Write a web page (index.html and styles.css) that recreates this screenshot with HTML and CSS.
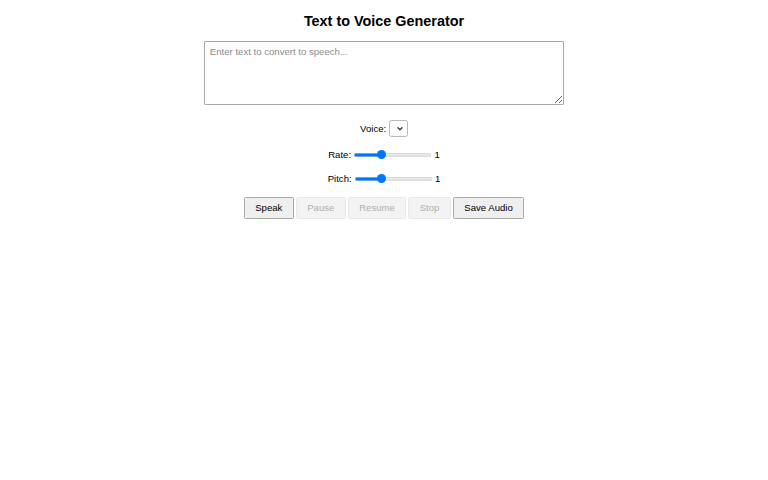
FILE: index.html
```html
<!DOCTYPE html>
<html lang="en">
<head>
<meta charset="utf-8">
<title>Text to Voice Generator</title>
<link rel="stylesheet" href="styles.css">
</head>
<body>
<main class="app">
  <h2 class="title">Text to Voice Generator</h2>
  <textarea class="text-input" placeholder="Enter text to convert to speech..."></textarea>
  <div class="controls">
    <div class="control">
      <label class="control-label" for="voice">Voice:</label>
      <span class="select-wrap">
        <select id="voice" class="voice-select"></select>
        <svg class="select-arrow" viewBox="0 0 6 4" width="6" height="4" aria-hidden="true"><path d="M1 0.8 L3 2.8 L5 0.8" fill="none" stroke="#333" stroke-width="1.3" stroke-linecap="round" stroke-linejoin="round"/></svg>
      </span>
    </div>
    <div class="control">
      <label class="control-label" for="rate">Rate:</label>
      <input id="rate" class="slider" type="range" min="0.5" max="2" step="0.1" value="1" style="--fill: 35%">
      <span class="control-value">1</span>
    </div>
    <div class="control">
      <label class="control-label" for="pitch">Pitch:</label>
      <input id="pitch" class="slider" type="range" min="0.5" max="2" step="0.1" value="1" style="--fill: 35%">
      <span class="control-value">1</span>
    </div>
  </div>
  <div class="buttons">
    <button class="btn">Speak</button>
    <button class="btn" disabled>Pause</button>
    <button class="btn" disabled>Resume</button>
    <button class="btn" disabled>Stop</button>
    <button class="btn">Save Audio</button>
  </div>
</main>
</body>
</html>
```

FILE: styles.css
```css
body {
  margin: 0;
  font-family: "Liberation Sans", Arial, sans-serif;
  font-size: 9.6px;
  color: #000;
  background: #fff;
}

.app {
  display: flex;
  flex-direction: column;
  align-items: center;
}

.title {
  font-size: 14.4px;
  font-weight: bold;
  margin: 12.6px 0 12.4px;
}

.text-input {
  box-sizing: border-box;
  width: 360px;
  height: 64.5px;
  padding: 3.6px 4.8px;
  margin: 0 0 14.4px;
  font-family: inherit;
  font-size: 9.6px;
  border: 1px solid #a9a9a9;
  border-radius: 1px;
}

.text-input::placeholder {
  color: #8c8c8c;
}

.controls {
  display: flex;
  flex-direction: column;
  align-items: center;
  gap: 12px;
}

.control {
  display: flex;
  align-items: center;
  justify-content: center;
  column-gap: 2.7px;
}

.select-wrap {
  position: relative;
  display: flex;
}

.voice-select {
  appearance: none;
  -webkit-appearance: none;
  box-sizing: border-box;
  width: 19px;
  height: 17px;
  margin: 0;
  border: 1px solid #b9b9b9;
  border-radius: 2.5px;
  background: #fff;
}

.select-arrow {
  position: absolute;
  left: 8.5px;
  top: 7px;
  pointer-events: none;
}

.slider {
  -webkit-appearance: none;
  appearance: none;
  width: 77px;
  height: 12px;
  margin: 0 0.5px;
  background: transparent;
}

.slider::-webkit-slider-runnable-track {
  height: 4px;
  border-radius: 2px;
  background: linear-gradient(to right, #0075ff 0 var(--fill), #e6e6e6 var(--fill));
  box-shadow: inset 0 0 0 0.6px #cfcfcf;
}

.slider::-webkit-slider-thumb {
  -webkit-appearance: none;
  appearance: none;
  width: 9px;
  height: 9px;
  margin-top: -2.5px;
  border-radius: 50%;
  background: #0075ff;
  border: none;
}

.buttons {
  display: flex;
  justify-content: center;
  gap: 2px;
  margin-top: 12px;
}

.btn {
  box-sizing: border-box;
  height: 22px;
  font-family: inherit;
  font-size: 9.6px;
  color: #000;
  padding: 0 10.4px;
  background: #efefef;
  border: 1px solid #a8a8a8;
  border-radius: 1.5px;
}

.btn:disabled {
  color: #b0b0b0;
  background: #f3f3f3;
  border-color: #e8e8e8;
}
```
